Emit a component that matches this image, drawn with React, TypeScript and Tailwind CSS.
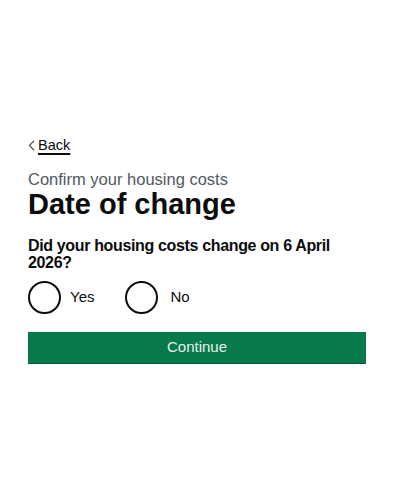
import React from "react";

export default function App() {
  return (
    <div
      className="w-[400px] h-[500px] bg-white text-[#0b0c0c] px-[28px] pt-[135px]"
      style={{ fontFamily: '"Liberation Sans", Arial, sans-serif' }}
    >
      <a className="flex items-center gap-[3px] h-[22px] text-[14.5px] text-[#0b0c0c]">
        <svg width="7" height="11" viewBox="0 0 7 11" className="mt-[-2px]">
          <path d="M6 0.8 L1.5 5.5 L6 10.2" fill="none" stroke="#505a5f" strokeWidth="1.3" />
        </svg>
        <span className="underline decoration-[1.5px] underline-offset-[3px]">Back</span>
      </a>
      <div className="mt-[12px] text-[16.5px] leading-[20px] text-[#505a5f]">
        Confirm your housing costs
      </div>
      <h1 className="text-[29px] leading-[30px] font-bold">Date of change</h1>
      <div className="mt-[18px] w-[338px] text-[16px] tracking-[-0.35px] leading-[17px] font-bold">
        Did your housing costs change on 6 April 2026?
      </div>
      <div className="mt-[9px] flex items-center h-[34px]">
        <label className="flex items-center">
          <span className="w-[33px] h-[33px] rounded-full border-[2px] border-[#0b0c0c] bg-white" />
          <span className="ml-[9px] text-[15px]">Yes</span>
        </label>
        <label className="flex items-center ml-[31px]">
          <span className="w-[33px] h-[33px] rounded-full border-[2px] border-[#0b0c0c] bg-white" />
          <span className="ml-[12px] text-[15px]">No</span>
        </label>
      </div>
      <button className="mt-[18px] w-[338px] h-[32px] bg-[#067a4a] text-[#e8f2ec] text-[15px] flex items-center justify-center border-b-[1px] border-[#045c38]">
        Continue
      </button>
    </div>
  );
}
